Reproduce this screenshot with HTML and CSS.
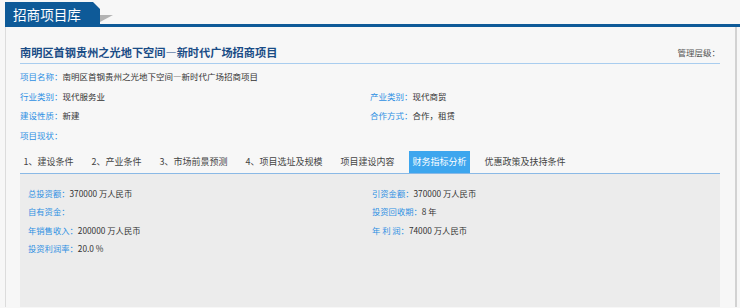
FILE: index.html
```html
<!DOCTYPE html>
<html lang="zh-CN">
<head>
  <meta charset="UTF-8">
  <title>招商项目库</title>
  <link rel="stylesheet" href="styles.css">
</head>
<body>
  <div class="head">
    <div class="head-tab">招商项目库</div>
    <div class="head-line"><span class="fold"></span></div>
  </div>
  <div class="wrap">
    <div class="title-bar">
      <h1>南明区首钢贵州之光地下空间—新时代广场招商项目</h1>
      <span class="level">管理层级：</span>
    </div>
    <div class="info">
      <p class="full"><b>项目名称：</b>南明区首钢贵州之光地下空间—新时代广场招商项目</p>
      <p><b>行业类别：</b>现代服务业</p>
      <p><b>产业类别：</b>现代商贸</p>
      <p><b>建设性质：</b>新建</p>
      <p><b>合作方式：</b>合作，租赁</p>
      <p class="full"><b>项目现状：</b></p>
    </div>
    <ul class="tabs">
      <li>1、建设条件</li>
      <li>2、产业条件</li>
      <li>3、市场前景预测</li>
      <li>4、项目选址及规模</li>
      <li>项目建设内容</li>
      <li class="on">财务指标分析</li>
      <li>优惠政策及扶持条件</li>
    </ul>
    <div class="panel">
      <p><b>总投资额：</b>370000 万人民币</p>
      <p><b>引资金额：</b>370000 万人民币</p>
      <p><b>自有资金：</b></p>
      <p><b>投资回收期：</b>8 年</p>
      <p><b>年销售收入：</b>200000 万人民币</p>
      <p><b>年 利 润：</b>74000 万人民币</p>
      <p><b>投资利润率：</b>20.0 %</p>
    </div>
  </div>
</body>
</html>
```

FILE: styles.css
```css
body{ margin:0; padding:0; background:#f7f7f7; font-family:"Noto Sans CJK SC","Noto Sans",sans-serif; color:#333; }
p,h1,ul{ margin:0; padding:0; }
b{ font-weight:normal; color:#2f90e3; }

/* 顶部标签 */
.head{ display:flex; align-items:flex-end; height:27px; padding-left:5px; }
.head-tab{
  width:95px; height:25px; box-sizing:border-box; padding-left:8px;
  background:#0e5a98; color:#fff; font-size:13.6px; line-height:25px;
  clip-path:polygon(0 0, 88px 0, 95px 7px, 95px 100%, 0 100%);
}
.head-line{ flex:1; height:9px; border-bottom:3px solid #0e5a98; display:flex; align-items:flex-start; }
.fold{ width:0; height:0; border-top:7px solid #b3b3b3; border-right:13px solid transparent; }

.wrap{ margin:0 3px 0 5px; padding:0 15px 0 14px; border-left:1px solid #dcdcdc; border-right:2px solid #d2d2d2; }

.title-bar{
  display:flex; justify-content:space-between; align-items:center;
  padding:15px 0 1px; border-bottom:1px solid #a9cdef;
}
.title-bar h1{ font-size:11.2px; line-height:20px; color:#1a4c86; font-weight:bold; font-variant-east-asian:full-width; }
.level{ font-size:8.5px; color:#555; }

.info{ display:grid; grid-template-columns:350px 1fr; padding-top:3px; font-size:8.5px; line-height:19.5px; }
.info .full{ grid-column:1 / 3; font-variant-east-asian:full-width; }

.tabs{ list-style:none; display:flex; gap:11px; margin-top:6px; border-bottom:1px solid #8ab9e6; }
.tabs li{ padding:0 3.5px; height:22px; line-height:22px; font-size:9px; color:#444; }
.tabs li.on{ background:#3da6ee; color:#fff; }

.panel{
  display:grid; grid-template-columns:344px 1fr; align-content:start;
  height:123px; padding:10px 0 0 8px; background:#ececec; font-size:8.3px; line-height:18.3px;
}
```
